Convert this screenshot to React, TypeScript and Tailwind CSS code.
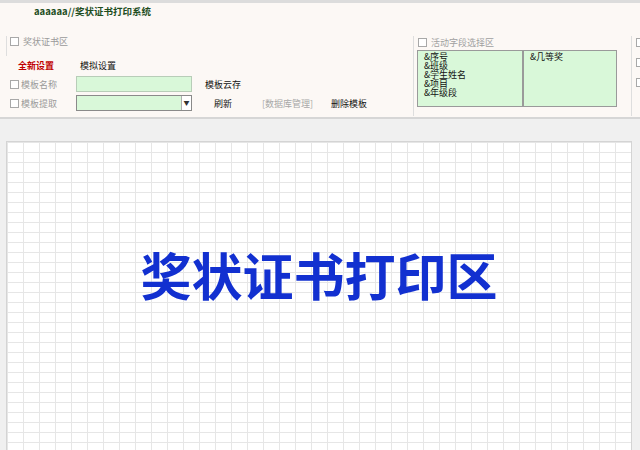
const FIELDS = ["&序号", "&班级", "&学生姓名", "&项目", "&年级段"];

function Box({ className = "" }: { className?: string }) {
  return <span className={`inline-block w-[9px] h-[9px] border border-[#a8a8a8] bg-white ${className}`} />;
}

export default function App() {
  return (
    <div className="w-[640px] h-[450px] overflow-hidden bg-[#f0f0f0] text-[9px] leading-none text-[#222] font-['Noto_Sans_CJK_SC','Noto_Sans',sans-serif]">
      {/* top panel */}
      <div className="h-[119px] bg-[#fcf8f5] border-t-[3px] border-[#dcdcdc] border-b-[2px] border-b-[#d6d6d6] flex flex-col">
        <div className="h-[22px] pl-[34px] pt-[4px] font-bold text-[9.5px] text-[#1d4d1d]">
          aaaaaa//奖状证书打印系统
        </div>
        <div className="flex flex-1">
          {/* left group */}
          <div className="w-[407px] ml-[6px] shrink-0 relative">
            <div className="absolute left-0 top-[11px] h-[20px] border-l border-[#dedede]" />
            <div className="absolute left-[4px] top-[12px] flex items-center gap-[4px] text-[#9a9a9a]">
              <Box />
              <span>奖状证书区</span>
            </div>
            <div className="absolute left-[12px] top-[36px] flex gap-[26px]">
              <span className="text-[#c00000] font-bold">全新设置</span>
              <span className="text-[#111]">模拟设置</span>
            </div>
            <div className="absolute left-[4px] top-[51px] flex items-center">
              <Box />
              <span className="ml-[2px] text-[#9a9a9a] w-[55px]">模板名称</span>
              <div className="w-[116px] h-[16px] bg-[#d9f8d9] border border-[#b8cdb8]" />
              <span className="ml-[13px] text-[#111]">模板云存</span>
            </div>
            <div className="absolute left-[4px] top-[70px] flex items-center">
              <Box />
              <span className="ml-[2px] text-[#9a9a9a] w-[55px]">模板提取</span>
              <div className="w-[116px] h-[16px] bg-[#d9f8d9] border border-[#8a8a8a] flex justify-end">
                <div className="w-[10px] h-full bg-white border-l border-[#b0b0b0] flex items-center justify-center text-[6px] text-[#333]">▼</div>
              </div>
              <span className="ml-[22px] text-[#111]">刷新</span>
              <span className="ml-[30px] text-[#a8a8a8]">[数据库管理]</span>
              <span className="ml-[18px] text-[#111]">删除模板</span>
            </div>
          </div>
          {/* field select group */}
          <div className="w-[218px] border-l border-[#dedede] self-stretch mt-[11px] mb-[1px] pl-[3px] shrink-0">
            <div className="flex items-center gap-[4px] text-[#a0a0a0] h-[13px]">
              <Box className="ml-[1px]" />
              <span>活动字段选择区</span>
            </div>
            <div className="flex mt-[1px]">
              <div className="w-[106px] h-[57px] bg-[#d9f8d9] border border-[#9a9a9a] pl-[6px] pt-[1px] leading-[9px] text-[#111]">
                {FIELDS.map((f) => (
                  <div key={f}>{f}</div>
                ))}
              </div>
              <div className="w-[94px] h-[57px] bg-[#d9f8d9] border border-[#9a9a9a] pl-[6px] pt-[1px] leading-[9px] text-[#111]">
                &amp;几等奖
              </div>
            </div>
          </div>
          <div className="border-l border-[#dedede] self-stretch mt-[11px] mb-[1px] pl-[4px] flex flex-col gap-[11px] pt-[2px]">
            <Box />
            <Box />
            <Box />
          </div>
        </div>
      </div>
      {/* print area */}
      <div className="pt-[22px] pl-[6px] pr-[8px]">
        <div className="h-[320px] border border-[#d4d4d4] bg-white bg-[linear-gradient(to_right,#e6e6e6_1px,transparent_1px),linear-gradient(to_bottom,#e6e6e6_1px,transparent_1px)] bg-[size:16px_10px] flex justify-center pt-[107px]">
          <div className="text-[51px] leading-none font-bold text-[#1230d0]">
            奖状证书打印区
          </div>
        </div>
      </div>
    </div>
  );
}
